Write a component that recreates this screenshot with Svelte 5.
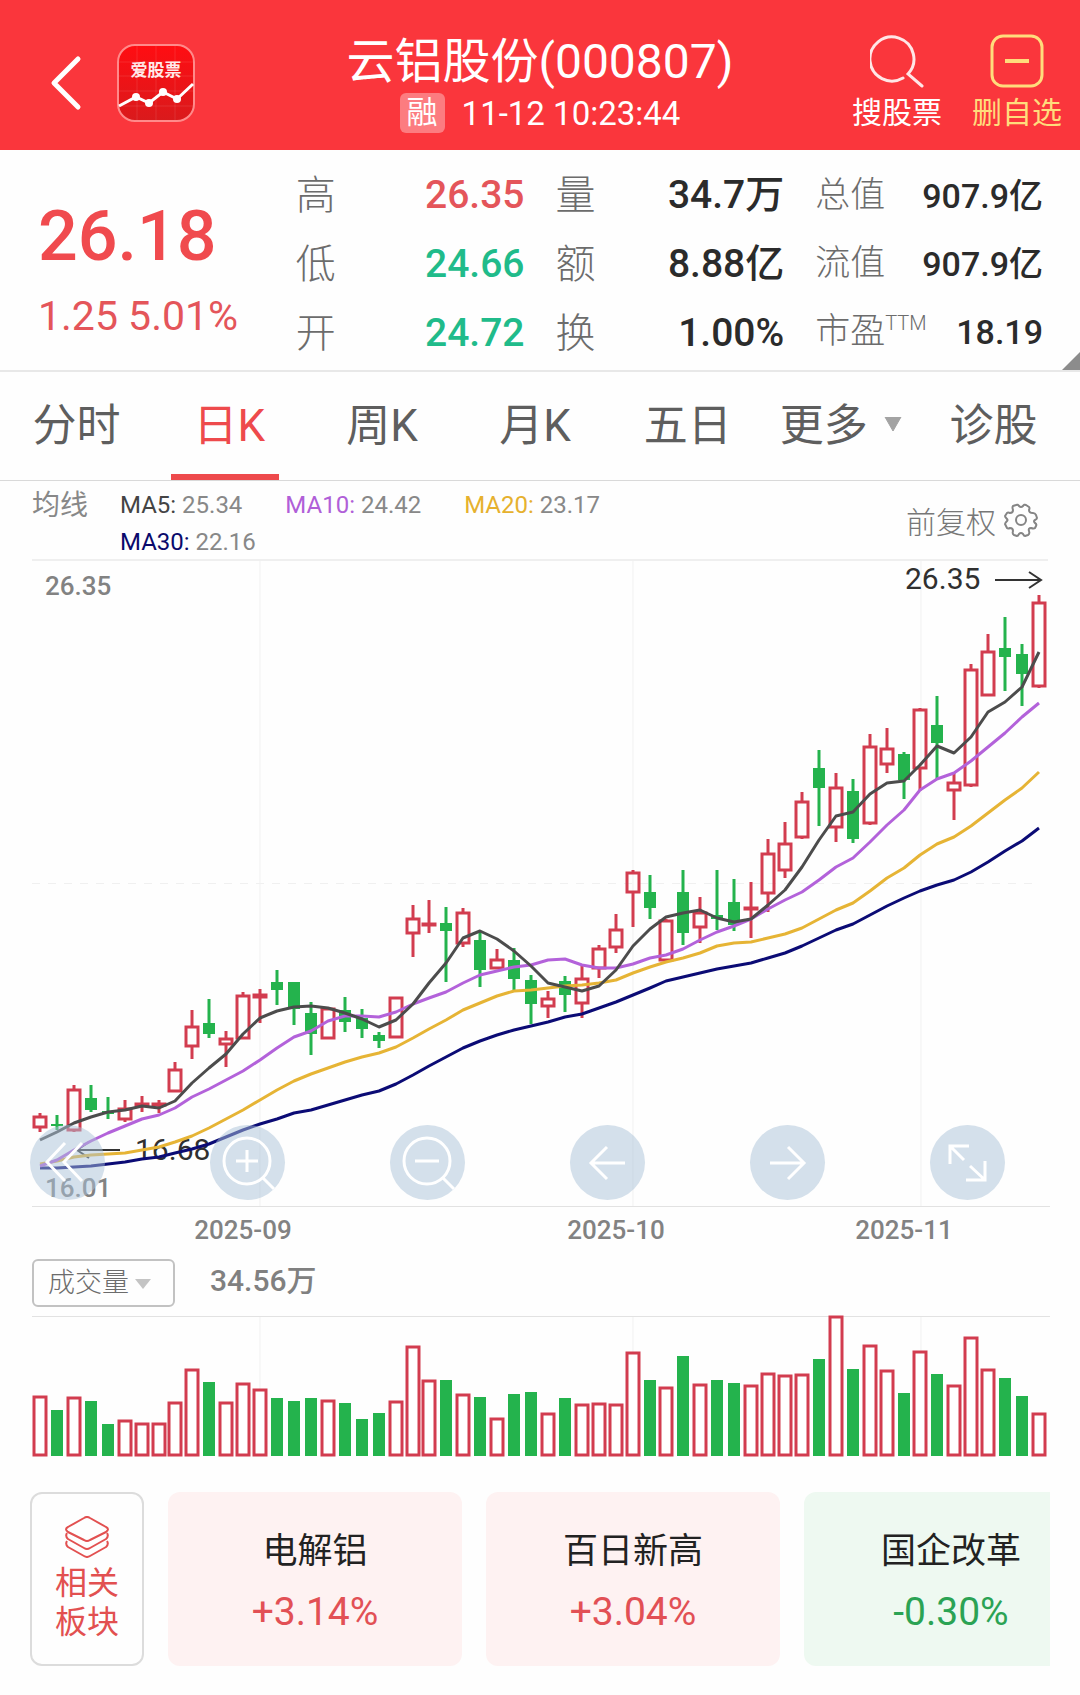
<script>
  const stats = [
    [
      { label: '高', value: '26.35', tone: 'up' },
      { label: '低', value: '24.66', tone: 'down' },
      { label: '开', value: '24.72', tone: 'down' },
    ],
    [
      { label: '量', value: '34.7万' },
      { label: '额', value: '8.88亿' },
      { label: '换', value: '1.00%' },
    ],
    [
      { label: '总值', value: '907.9亿' },
      { label: '流值', value: '907.9亿' },
      { label: '市盈', sup: 'TTM', value: '18.19' },
    ],
  ];

  const tabs = ['分时', '日K', '周K', '月K', '五日', '更多', '诊股'];
  let activeTab = $state('日K');

  const averages = [
    { name: 'MA5', value: '25.34', key: 'ma5' },
    { name: 'MA10', value: '24.42', key: 'ma10' },
    { name: 'MA20', value: '23.17', key: 'ma20' },
    { name: 'MA30', value: '22.16', key: 'ma30' },
  ];

  // [direction, high, body top, body bottom, low, volume top]
  const candles = [
    ['r', 1113, 1116, 1128, 1132, 1396], ['g', 1115, 1124, 1126, 1130, 1410],
    ['r', 1085, 1089, 1131, 1132, 1397], ['g', 1085, 1098, 1110, 1112, 1401],
    ['g', 1097, 1111, 1114, 1119, 1424], ['r', 1100, 1108, 1120, 1122, 1420],
    ['r', 1096, 1103, 1105, 1112, 1423], ['r', 1100, 1103, 1106, 1113, 1423],
    ['r', 1062, 1069, 1092, 1092, 1402], ['r', 1010, 1026, 1047, 1059, 1369],
    ['g', 999, 1023, 1034, 1038, 1382], ['r', 1031, 1038, 1045, 1067, 1402],
    ['r', 992, 995, 1039, 1039, 1383], ['r', 989, 994, 998, 1023, 1389],
    ['g', 970, 982, 990, 1005, 1398], ['g', 982, 982, 1009, 1025, 1401],
    ['g', 1002, 1013, 1034, 1055, 1398], ['r', 1007, 1008, 1039, 1039, 1400],
    ['g', 997, 1010, 1022, 1032, 1403], ['g', 1009, 1018, 1029, 1038, 1419],
    ['g', 1032, 1035, 1041, 1048, 1413], ['r', 997, 997, 1038, 1038, 1401],
    ['r', 905, 918, 934, 957, 1346], ['r', 900, 923, 926, 933, 1380],
    ['g', 907, 923, 931, 982, 1380], ['r', 908, 912, 944, 947, 1394],
    ['g', 932, 940, 970, 987, 1397], ['r', 949, 959, 969, 969, 1418],
    ['g', 948, 960, 979, 991, 1394], ['g', 975, 980, 1004, 1024, 1392],
    ['r', 991, 998, 1007, 1018, 1413], ['g', 976, 981, 995, 1012, 1398],
    ['r', 966, 978, 1004, 1018, 1404], ['r', 945, 948, 969, 978, 1403],
    ['r', 914, 929, 948, 953, 1404], ['r', 870, 872, 893, 927, 1352],
    ['g', 875, 892, 908, 919, 1380], ['r', 919, 920, 961, 961, 1387],
    ['g', 870, 892, 933, 945, 1356], ['r', 897, 912, 928, 943, 1384],
    ['g', 870, 915, 919, 930, 1380], ['g', 879, 902, 925, 931, 1383],
    ['r', 882, 907, 910, 938, 1385], ['r', 839, 853, 894, 912, 1373],
    ['r', 822, 843, 871, 878, 1375], ['r', 792, 801, 838, 839, 1374],
    ['g', 750, 768, 788, 826, 1359], ['r', 773, 787, 828, 842, 1316],
    ['g', 779, 791, 839, 843, 1369], ['r', 734, 746, 824, 825, 1345],
    ['r', 728, 748, 765, 773, 1370], ['g', 752, 754, 780, 799, 1393],
    ['r', 708, 709, 769, 791, 1351], ['g', 696, 725, 743, 780, 1374],
    ['r', 773, 782, 791, 820, 1385], ['r', 664, 669, 786, 787, 1337],
    ['r', 634, 651, 696, 696, 1369], ['g', 617, 648, 657, 691, 1378],
    ['g', 644, 654, 674, 706, 1396], ['r', 595, 602, 687, 688, 1413],
  ];

  const lines = {
    ma30: [1168, 1168, 1167, 1166, 1164, 1162, 1159, 1157, 1153, 1149, 1144, 1137, 1130, 1124, 1119, 1113, 1110, 1105, 1100, 1095, 1091, 1084, 1075, 1066, 1057, 1048, 1041, 1035, 1030, 1026, 1022, 1017, 1014, 1008, 1002, 995, 988, 981, 977, 973, 969, 966, 963, 958, 953, 946, 938, 930, 924, 915, 906, 898, 891, 885, 880, 872, 862, 851, 841, 828],
    ma20: [1164, 1161, 1157, 1155, 1154, 1153, 1150, 1147, 1142, 1136, 1128, 1119, 1110, 1100, 1090, 1081, 1074, 1068, 1062, 1057, 1053, 1047, 1038, 1029, 1020, 1010, 1003, 996, 991, 990, 988, 986, 985, 983, 980, 973, 967, 962, 958, 953, 946, 943, 942, 938, 934, 928, 919, 910, 903, 891, 878, 868, 855, 844, 837, 826, 813, 800, 788, 772],
    ma10: [1166, 1160, 1150, 1141, 1133, 1126, 1119, 1115, 1108, 1097, 1089, 1080, 1071, 1060, 1048, 1037, 1031, 1021, 1016, 1016, 1017, 1012, 1004, 998, 992, 983, 975, 971, 967, 965, 960, 959, 965, 968, 968, 964, 958, 955, 949, 940, 932, 926, 919, 909, 900, 892, 880, 867, 858, 842, 825, 810, 790, 779, 773, 761, 747, 733, 717, 703],
    ma5: [1140, 1132, 1123, 1117, 1112, 1110, 1106, 1108, 1101, 1083, 1068, 1054, 1034, 1018, 1011, 1007, 1006, 1008, 1013, 1019, 1027, 1020, 1004, 983, 963, 938, 931, 939, 951, 966, 983, 987, 991, 986, 970, 946, 929, 917, 913, 910, 918, 922, 919, 905, 890, 867, 840, 816, 812, 794, 783, 781, 765, 746, 753, 737, 712, 702, 687, 652],
  };

  const months = [
    { x: 260, label: '2025-09' },
    { x: 633, label: '2025-10' },
    { x: 921, label: '2025-11' },
  ];

  const step = 999 / 59;
  const cx = (i) => Math.round(40 + i * step);
  const points = (ys) => ys.map((y, i) => `${cx(i)},${y}`).join(' ');

  const tools = [
    { label: '收起', d: 'M35 18 17 37 35 56M52 18 34 37 52 56' },
    { label: '放大', d: 'M60 36a23 23 0 1 1-46 0a23 23 0 1 1 46 0M53 53 64 64M37 25V47M26 36H48' },
    { label: '缩小', d: 'M60 36a23 23 0 1 1-46 0a23 23 0 1 1 46 0M53 53 64 64M25 36H49' },
    { label: '左移', d: 'M55 38H21M37 22 21 38 37 54' },
    { label: '右移', d: 'M20 38H54M38 22 54 38 38 54' },
    { label: '全屏', d: 'M34 35 20 21M20 39V21H39M40 41 55 55M55 36V55H36' },
  ];

  const sectors = [
    { name: '电解铝', change: '+3.14%', tone: 'up' },
    { name: '百日新高', change: '+3.04%', tone: 'up' },
    { name: '国企改革', change: '-0.30%', tone: 'down' },
  ];
</script>

<header>
  <div class="head-left">
    <button class="back" aria-label="返回">
      <svg width="32" height="56" viewBox="0 0 32 56"><path d="M28 4 4 28 28 52" fill="none" stroke="#fff" stroke-width="5" stroke-linecap="round" stroke-linejoin="round" /></svg>
    </button>
    <div class="logo">
      <svg viewBox="0 0 78 78" width="78" height="78">
        <defs>
          <linearGradient id="logo-bg" x1="0" y1="0" x2="0" y2="1">
            <stop offset="0" stop-color="#ff0d12" /><stop offset="1" stop-color="#d91a1c" />
          </linearGradient>
        </defs>
        <rect x="1" y="1" width="76" height="76" rx="17" fill="url(#logo-bg)" stroke="#ff8a8a" stroke-width="2" />
        <path d="M20 2V76M39 2V76M58 2V76M2 18H76M2 32H76M2 47H76M2 62H76" stroke="#fff" stroke-opacity=".1" />
        <path d="M2 62 19 53 32 59 46 48 60 55 76 40" fill="none" stroke="#fff" stroke-width="3" />
        <g fill="#fff"><circle cx="19" cy="53" r="4" /><circle cx="32" cy="59" r="4" /><circle cx="46" cy="48" r="4" /><circle cx="60" cy="55" r="4" /></g>
        <text x="39" y="32" text-anchor="middle" font-size="17" font-weight="700" fill="#ffe9e9">爱股票</text>
      </svg>
    </div>
  </div>
  <div class="title">
    <h1>云铝股份(000807)</h1>
    <div class="sub"><span class="badge">融</span><time>11-12 10:23:44</time></div>
  </div>
  <div class="head-right">
    <button class="action">
      <svg width="54" height="54" viewBox="0 0 54 54" fill="none" stroke="#ffe6e6" stroke-width="3" stroke-linecap="round"><path d="M33 44A22 22 0 1 1 38 40L52 52" /></svg>
      搜股票
    </button>
    <button class="action gold">
      <svg width="54" height="54" viewBox="0 0 54 54" fill="none" stroke="#ffdc7c" stroke-width="3"><rect x="2" y="2" width="50" height="50" rx="11" /><path d="M15 27H39" stroke-width="4" /></svg>
      删自选
    </button>
  </div>
</header>

<section class="quote">
  <div class="price">
    <strong>26.18</strong>
    <span>1.25 5.01%</span>
  </div>
  {#each stats as col, c}
    <dl class:small={c === 2}>
      {#each col as s}
        <div><dt>{s.label}{#if s.sup}<sup>{s.sup}</sup>{/if}</dt><dd class={s.tone}>{s.value}</dd></div>
      {/each}
    </dl>
  {/each}
  <i class="corner"></i>
</section>

<nav>
  {#each tabs as t}
    <button class:active={activeTab === t} onclick={() => (activeTab = t)}>
      {t}{#if t === '更多'}<svg class="caret" width="18" height="14" viewBox="0 0 18 14"><path d="M1 0H17L9 14Z" fill="#a3a3a3" stroke="#a3a3a3" /></svg>{/if}
    </button>
  {/each}
</nav>

<main>
  <div class="legend">
    <span class="legend-name">均线</span>
    <ul>
      {#each averages as a}
        <li><b class={a.key}>{a.name}:</b> {a.value}</li>
      {/each}
    </ul>
    <button class="adjust">
      前复权
      <svg width="34" height="34" viewBox="0 0 34 34" fill="none" stroke="#858585" stroke-width="2" stroke-linejoin="round">
        <path d="M12 2Q14 1 15 3Q17 5 19 3Q20 1 22 2L25 4Q26 5 25 7Q25 10 29 10Q31 10 32 12L33 15Q33 16 31 17Q29 18 31 20Q33 21 32 23L31 25Q30 26 27 25Q24 25 25 28Q26 31 24 32L21 33Q20 33 19 31Q17 29 15 31Q14 33 13 33L10 32Q8 31 9 28Q9 25 6 25Q4 26 3 25L1 21Q1 20 3 18Q4 17 3 16Q1 14 1 13L3 10Q4 9 6 10Q9 10 9 7Q8 4 9 3Z" />
        <circle cx="17" cy="17" r="5" />
      </svg>
    </button>
  </div>

  <div class="chart">
    <svg class="plot" viewBox="32 559 1018 692" role="img" aria-label="日K线图">
      <path d="M32 560H1048" stroke="#efefef" stroke-width="2" />
      <path d="M32 1206.5H1050" stroke="#e2e2e2" />
      <path d="M32 883.5H1040" stroke="#f0f0f0" stroke-dasharray="8 8" />
      {#each months as m}
        <path d="M{m.x} 561V1206" stroke="#f1f1f1" />
        <text class="axis" x={m.x - 17} y="1239" text-anchor="middle">{m.label}</text>
      {/each}
      <text class="axis" x="45" y="595">26.35</text>
      <text class="axis" x="45" y="1197">16.01</text>
      <text class="mark" x="905" y="589">26.35</text>
      <path d="M995 580H1040M1029 572 1041 580 1029 588" fill="none" stroke="#333" stroke-width="2" />
      <text class="mark" x="135" y="1160">16.68</text>
      <path d="M120 1150H78M89 1142 77 1150 89 1158" fill="none" stroke="#333" stroke-width="2" />
      {#each candles as [dir, high, top, bottom, low], i}
        {#if dir === 'g'}
          <path d="M{cx(i)} {high}V{low}" class="green-line" />
          <rect x={cx(i) - 6} y={top} width="12" height={bottom - top} class="green" />
        {:else}
          <path d="M{cx(i)} {high}V{top}M{cx(i)} {bottom}V{low}" class="red-line" />
          <rect x={cx(i) - 6} y={top + 1} width="12" height={Math.max(bottom - top - 2, 1)} class="red" />
        {/if}
      {/each}
      {#each Object.entries(lines) as [key, ys]}
        <polyline class="line {key}" points={points(ys)} />
      {/each}
    </svg>
    <div class="tools">
      {#each tools as t}
        <button aria-label={t.label}>
          <svg width="75" height="75" viewBox="0 0 75 75" fill="none" stroke="#fff" stroke-width="3"><path d={t.d} /></svg>
        </button>
      {/each}
    </div>
  </div>

  <div class="volume-head">
    <div class="picker">
      <select aria-label="指标"><option>成交量</option></select>
      <svg width="16" height="10" viewBox="0 0 16 10"><path d="M0 0H16L8 10Z" fill="#c4c4c4" /></svg>
    </div>
    <span>34.56万</span>
  </div>

  <svg class="plot" viewBox="32 1314 1018 143" role="img" aria-label="成交量">
    <path d="M32 1316.5H1050" stroke="#e2e2e2" />
    {#each months as m}
      <path d="M{m.x} 1317V1456" stroke="#f1f1f1" />
    {/each}
    {#each candles as [dir, , , , , top], i}
      {#if dir === 'g'}
        <rect x={cx(i) - 6} y={top} width="12" height={1456 - top} class="green" />
      {:else}
        <rect x={cx(i) - 6} y={top + 1} width="12" height={1454 - top} class="red hollow" />
      {/if}
    {/each}
  </svg>

  <div class="sectors">
    <button class="related">
      <svg width="44" height="42" viewBox="0 0 44 42" fill="none" stroke="#e25050" stroke-width="2" stroke-linejoin="round">
        <path d="M19 2Q22 0 25 2L41 11Q45 13 41 16L25 24Q22 26 19 24L3 16Q-1 13 3 11Z" />
        <path d="M2 17Q0 20 3 23L19 32Q22 34 25 32L41 23Q44 20 42 17" />
        <path d="M2 25Q0 28 3 31L19 40Q22 42 25 40L41 31Q44 28 42 25" />
      </svg>
      <span>相关<br />板块</span>
    </button>
    <div class="strip">
      {#each sectors as s}
        <a href="#{s.name}" class={s.tone}><span>{s.name}</span><b>{s.change}</b></a>
      {/each}
    </div>
  </div>
</main>

<style>
  :global(body) {
    margin: 0;
    background: #fefefe;
    font-family: Roboto, 'Noto Sans CJK SC', sans-serif;
  }
  button {
    border: 0;
    padding: 0;
    background: none;
    font: inherit;
    color: inherit;
    cursor: pointer;
  }
  svg {
    display: block;
  }
  header {
    display: grid;
    grid-template-columns: 1fr auto 1fr;
    height: 150px;
    box-sizing: border-box;
    background: #fa363c;
    color: #fff;
  }
  .head-left {
    display: flex;
    align-items: center;
    gap: 35px;
    padding: 16px 0 0 50px;
  }
  .title {
    display: flex;
    flex-direction: column;
    align-items: center;
    padding-top: 32px;
  }
  h1 {
    margin: 0;
    font-size: 48px;
    font-weight: 400;
    line-height: 60px;
  }
  .sub {
    display: flex;
    align-items: center;
    gap: 17px;
    font-size: 33px;
    line-height: 40px;
  }
  .sub time {
    padding-top: 2px;
  }
  .badge {
    width: 45px;
    border-radius: 6px;
    background: rgba(255, 255, 255, 0.35);
    font-size: 31px;
    text-align: center;
  }
  .head-right {
    display: flex;
    justify-content: flex-end;
    align-items: flex-start;
    gap: 30px;
    padding: 34px 18px 0 0;
  }
  .action {
    display: flex;
    flex-direction: column;
    align-items: center;
    gap: 7px;
    font-size: 30px;
    line-height: 36px;
  }
  .gold {
    color: #ffdc7c;
  }
  .quote {
    position: relative;
    display: grid;
    grid-template-columns: 226fr 228fr 228fr 227fr;
    column-gap: 31px;
    height: 220px;
    padding: 0 37px 0 38px;
    border-bottom: 2px solid #e8e8e8;
  }
  .price {
    display: flex;
    flex-direction: column;
    padding-top: 44px;
    color: #f04a4e;
  }
  .price strong {
    font-size: 70px;
    font-weight: 500;
    line-height: 84px;
  }
  .price span {
    margin-top: 14px;
    color: #e4555a;
    font-size: 41px;
    line-height: 48px;
    white-space: nowrap;
  }
  dl {
    margin: 0;
    padding-top: 11px;
    font-size: 40px;
    line-height: 69px;
  }
  dl div {
    display: flex;
    justify-content: space-between;
  }
  dt {
    color: #6c6c6c;
    font-weight: 300;
    white-space: nowrap;
  }
  dd {
    margin: 0;
    color: #2b2b2b;
    font-size: 39px;
    font-weight: 500;
    white-space: nowrap;
  }
  dl.small {
    padding-top: 12px;
    font-size: 35px;
    line-height: 68px;
  }
  .small dd {
    font-size: 34px;
  }
  sup {
    font-size: 20px;
    line-height: 20px;
  }
  dd.up {
    color: #e4555a;
  }
  dd.down {
    color: #20bb8a;
  }
  .corner {
    position: absolute;
    right: 0;
    bottom: 0;
    border-left: 18px solid transparent;
    border-bottom: 18px solid #8c8c8c;
  }
  nav {
    display: grid;
    grid-template-columns: repeat(7, 1fr);
    height: 108px;
    padding-right: 10px;
    border-bottom: 1px solid #d9d9d9;
    color: #5e5e5e;
    font-size: 44px;
  }
  nav button {
    position: relative;
    display: flex;
    align-items: center;
    justify-content: center;
    padding-bottom: 8px;
    white-space: nowrap;
  }
  .caret {
    margin: 4px 0 0 16px;
  }
  nav .active {
    color: #ee4a4c;
  }
  nav .active::after {
    content: '';
    position: absolute;
    bottom: 0;
    left: 18px;
    width: 108px;
    height: 6px;
    background: #ee4a4c;
  }
  main {
    padding: 0 30px 28px 32px;
  }
  .legend {
    display: flex;
    height: 78px;
    color: #888;
  }
  .legend-name {
    width: 88px;
    padding-top: 6px;
    font-size: 28px;
    line-height: 37px;
  }
  ul {
    display: flex;
    flex-wrap: wrap;
    align-content: flex-start;
    column-gap: 43px;
    width: 500px;
    margin: 0;
    padding: 6px 0 0;
    list-style: none;
    font-size: 24px;
    line-height: 37px;
  }
  li b {
    font-weight: 400;
  }
  b.ma5 { color: #444; }
  b.ma10 { color: #b05fd8; }
  b.ma20 { color: #e6b12e; }
  b.ma30 { color: #0a0a6c; }
  .adjust {
    display: flex;
    align-items: center;
    gap: 8px;
    margin-left: auto;
    padding-right: 12px;
    color: #777;
    font-size: 30px;
    font-weight: 300;
  }
  .chart {
    position: relative;
  }
  .plot {
    width: 100%;
    height: auto;
  }
  .axis {
    font-size: 26px;
    font-weight: 500;
    fill: #828282;
  }
  .mark {
    font-size: 30px;
    fill: #303030;
  }
  .green { fill: #24b34d; }
  .green-line { stroke: #24b34d; stroke-width: 3; }
  .red { fill: none; stroke: #d23c4f; stroke-width: 3; }
  .red.hollow { fill: #fff; }
  .red-line { stroke: #d23c4f; stroke-width: 3; }
  .line { fill: none; stroke-width: 3; stroke-linejoin: round; }
  .line.ma5 { stroke: #4c4c4c; }
  .line.ma10 { stroke: #b362da; }
  .line.ma20 { stroke: #e6b435; }
  .line.ma30 { stroke: #0b0b75; }
  .tools {
    position: absolute;
    right: 45px;
    bottom: 51px;
    left: -2px;
    display: flex;
    justify-content: space-between;
  }
  .tools button {
    border-radius: 50%;
    background: rgba(170, 194, 216, 0.5);
  }
  .volume-head {
    display: flex;
    align-items: flex-start;
    gap: 35px;
    height: 55px;
    padding-top: 8px;
    color: #808080;
    font-size: 30px;
    font-weight: 500;
    line-height: 44px;
  }
  .picker {
    position: relative;
  }
  .picker svg {
    position: absolute;
    top: 20px;
    right: 24px;
    pointer-events: none;
  }
  select {
    display: block;
    appearance: none;
    width: 143px;
    height: 48px;
    padding: 0 0 0 14px;
    border: 2px solid #c2c2c2;
    border-radius: 6px;
    background: none;
    color: #6c6c6c;
    font: 300 27px Roboto, 'Noto Sans CJK SC', sans-serif;
  }
  .sectors {
    display: flex;
    gap: 24px;
    margin: 35px 0 0 -2px;
  }
  .related {
    display: flex;
    flex: none;
    flex-direction: column;
    align-items: center;
    box-sizing: border-box;
    width: 114px;
    height: 174px;
    padding-top: 22px;
    border: 2px solid #dcdcdc;
    border-radius: 12px;
    color: #e25050;
    font-size: 32px;
    line-height: 39px;
  }
  .related span {
    margin-top: 6px;
  }
  .strip {
    display: flex;
    gap: 24px;
    overflow: hidden;
  }
  .strip a {
    display: flex;
    flex: none;
    flex-direction: column;
    align-items: center;
    gap: 6px;
    box-sizing: border-box;
    width: 294px;
    height: 174px;
    padding-top: 33px;
    border-radius: 12px;
    background: #fef2f2;
    color: #222;
    font-size: 35px;
    line-height: 54px;
    text-decoration: none;
  }
  .strip b {
    color: #e25055;
    font-size: 39px;
    font-weight: 400;
  }
  .strip .down {
    background: #eef9f1;
  }
  .strip .down b {
    color: #2ba354;
  }
</style>
